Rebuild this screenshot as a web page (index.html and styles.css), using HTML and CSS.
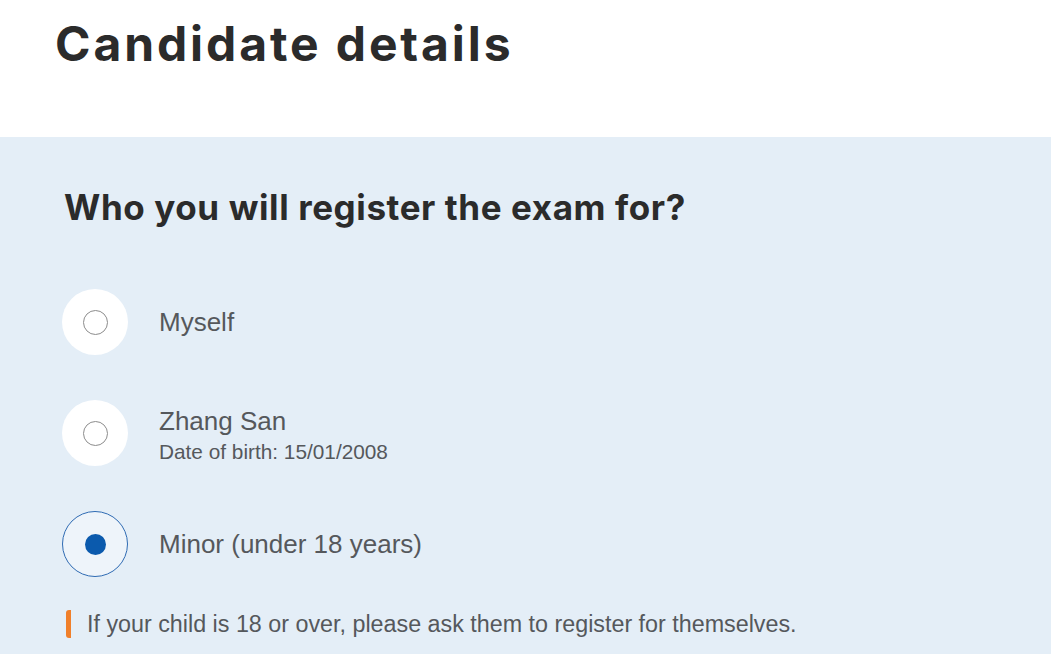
FILE: index.html
```html
<!DOCTYPE html>
<html lang="en">
<head>
    <meta charset="UTF-8">
    <meta name="viewport" content="width=device-width, initial-scale=1.0">
    <title>Candidate details</title>
    <link rel="stylesheet" href="styles.css">
</head>
<body>
    <div class="page-header">
        <h1>Candidate details</h1>
    </div>

    <!-- Who is the candidate -->
    <div class="panel">
        <h2>Who you will register the exam for?</h2>

        <div class="options">
            <label class="option">
                <span class="radio"><span class="radio-mark"></span></span>
                <span class="option-text">
                    <span class="option-name">Myself</span>
                </span>
            </label>

            <label class="option">
                <span class="radio"><span class="radio-mark"></span></span>
                <span class="option-text">
                    <span class="option-name">Zhang San</span>
                    <span class="option-sub">Date of birth: 15/01/2008</span>
                </span>
            </label>

            <label class="option selected">
                <span class="radio"><span class="radio-mark"></span></span>
                <span class="option-text">
                    <span class="option-name">Minor (under 18 years)</span>
                </span>
            </label>
        </div>

        <p class="note">If your child is 18 or over, please ask them to register for themselves.</p>
    </div>
</body>
</html>
```

FILE: styles.css
```css
body {
    margin: 0;
    padding: 0;
    background-color: #fff;
    font-family: "Liberation Sans", Arial, sans-serif;
    color: #55585c;
}
.page-header {
    height: 137px;
    padding: 0 55px;
    box-sizing: border-box;
    overflow: hidden;
}
h1 {
    margin: 0;
    padding-top: 12px;
    font-family: Inter, "Liberation Sans", sans-serif;
    font-weight: 700;
    font-size: 48px;
    line-height: 64px;
    letter-spacing: 2.9px;
    color: #2b2b2b;
}
.panel {
    background-color: #e4eef7;
    padding: 48px 62px 20px;
    min-height: 517px;
    box-sizing: border-box;
}
h2 {
    margin: 0 0 0 2px;
    font-family: Inter, "Liberation Sans", sans-serif;
    font-weight: 700;
    font-size: 35px;
    line-height: 44px;
    letter-spacing: 0.6px;
    color: #2b2b2b;
}
.options {
    display: flex;
    flex-direction: column;
    gap: 45px;
    margin-top: 60px;
}
.option {
    display: flex;
    align-items: center;
    gap: 31px;
    cursor: pointer;
}
.radio {
    width: 66px;
    height: 66px;
    border-radius: 50%;
    background-color: #fff;
    display: flex;
    align-items: center;
    justify-content: center;
    box-sizing: border-box;
    flex-shrink: 0;
}
.radio-mark {
    width: 25px;
    height: 25px;
    border-radius: 50%;
    border: 1.5px solid #8c8c8c;
    box-sizing: border-box;
}
.selected .radio {
    background-color: #eef4fa;
    border: 1.5px solid #2f6bb3;
}
.selected .radio-mark {
    width: 21px;
    height: 21px;
    border: none;
    background-color: #0b5aad;
}
.option-text {
    display: flex;
    flex-direction: column;
}
.option-name {
    font-size: 26px;
    line-height: 38px;
}
.option-sub {
    font-size: 20.8px;
    line-height: 24px;
}
.note {
    margin: 33px 0 0 4px;
    padding-left: 16px;
    border-left: 5px solid #f07f2a;
    border-radius: 3px;
    font-size: 23.3px;
    line-height: 28px;
}
```
